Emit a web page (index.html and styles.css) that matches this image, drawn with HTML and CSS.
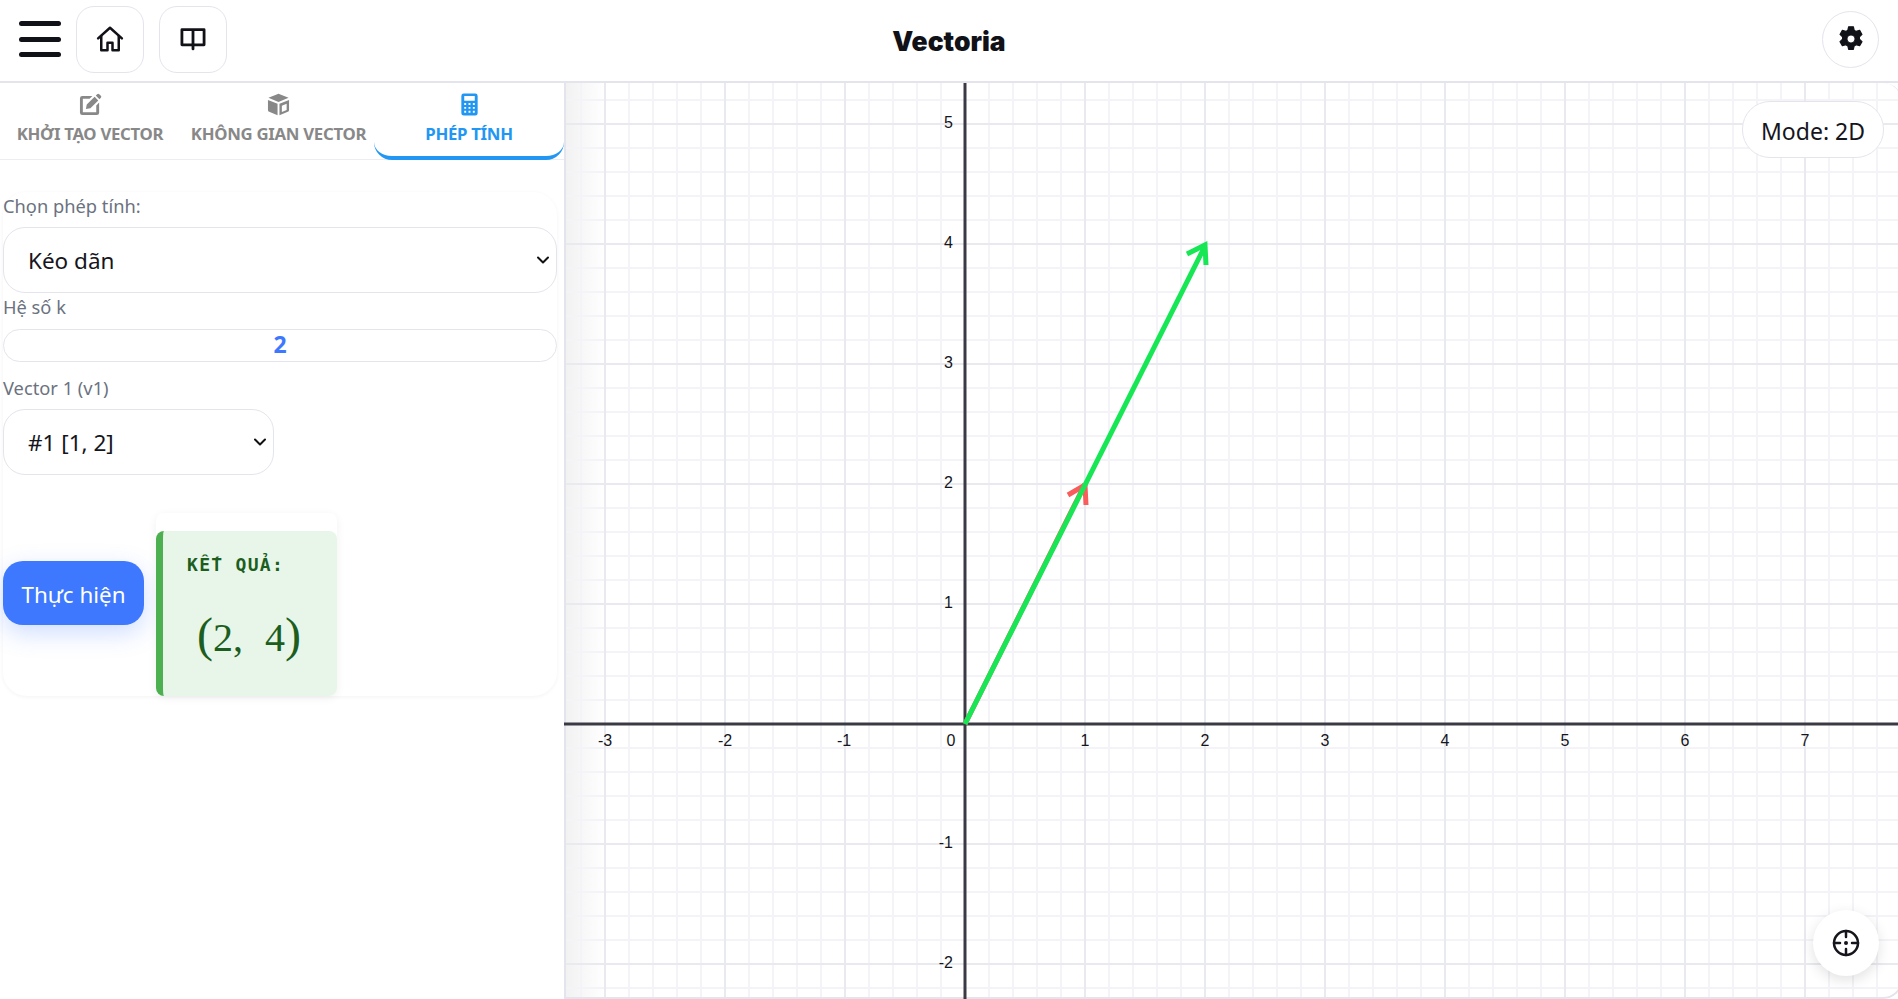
FILE: index.html
```html
<!DOCTYPE html>
<html lang="vi">
<head>
  <meta charset="UTF-8" />
  <meta name="viewport" content="width=device-width, initial-scale=1.0"/>
  <title>Vectoria</title>
  <link rel="stylesheet" href="styles.css">
</head>
<body>

  <header class="topbar">
    <div class="topbar-left">
      <button class="menu-btn" aria-label="Menu"><span></span><span></span><span></span></button>
      <button class="icon-btn" aria-label="Home">
        <svg width="30" height="30" viewBox="0 0 24 24" fill="none" stroke="#111118" stroke-width="2" stroke-linejoin="round" stroke-linecap="round"><path d="M2.5 11.5 12 3l9.5 8.500"/><path d="M5 9.5V21h5v-6h4v6h5V9.5"/></svg>
      </button>
      <button class="icon-btn" aria-label="Guide">
        <svg width="28" height="28" viewBox="0 0 24 24" fill="none" stroke="#111118" stroke-width="2.4" stroke-linejoin="round" stroke-linecap="round"><path d="M12 4H2.500v13H12V4zM12 4h9.500v13H12"/><path d="M12 17v3.500"/></svg>
      </button>
    </div>
    <h1 class="brand">Vectoria</h1>
    <button class="settings-btn" aria-label="Settings">
      <svg width="28" height="28" viewBox="0 0 24 24" fill="#111118" stroke="#111118" stroke-width="1" stroke-linejoin="round"><path fill-rule="evenodd" d="M10 1.500h4l.7 3 1.700 1 3-.9 2 3.500-2.200 2.100v2l2.200 2.100-2 3.500-3-.9-1.700 1-.7 3h-4l-.7-3-1.700-1-3 .9-2-3.500 2.200-2.100v-2L2.600 8.100l2-3.500 3 .9 1.700-1zM12 8.500a3.500 3.500 0 1 0 0 7 3.500 3.500 0 0 0 0-7z"/></svg>
    </button>
  </header>

  <div class="workspace">
    <aside class="sidebar">
      <nav class="tabs">
        <div class="tab">
          <svg width="23" height="23" viewBox="0 0 24 24" fill="currentColor"><path d="M3.5 3H14l-3 3H4v14h14v-7l3-3v10.500a2.500 2.500 0 0 1-2.500 2.500h-15A2.500 2.500 0 0 1 1 20.500v-15A2.500 2.500 0 0 1 3.500 3z"/><path d="M19 1.200a1.500 1.500 0 0 1 2.100 0l1.700 1.700a1.500 1.500 0 0 1 0 2.100l-1.500 1.500-3.800-3.800zM16.300 3.900l3.800 3.800-8.200 8.200-4.700.9.900-4.700z"/></svg>
          <span>KHỞI TẠO VECTOR</span>
        </div>
        <div class="tab">
          <svg width="23" height="23" viewBox="0 0 24 24" fill="currentColor"><path d="M12 .8 22.500 5 12 9.300 1.500 5z"/><path d="M1 7.200 11 11.300V23.200L2.300 19.600A2 2 0 0 1 1 17.700z"/><path fill-rule="evenodd" d="M23 7.200V17.700a2 2 0 0 1-1.300 1.900L13 23.200V11.300zM20.500 11.200 15.500 13.200V19.800L20.500 17.700z"/></svg>
          <span>KHÔNG GIAN VECTOR</span>
        </div>
        <div class="tab active">
          <svg width="23" height="23" viewBox="0 0 24 24" fill="currentColor"><path fill-rule="evenodd" d="M6 .5h12A2.500 2.500 0 0 1 20.500 3v18a2.500 2.500 0 0 1-2.500 2.500H6A2.500 2.500 0 0 1 3.500 21V3A2.500 2.500 0 0 1 6 .5zM6.500 3v5h11V3zM6.500 10.500v2h2v-2zM11 10.500v2h2v-2zM15.500 10.500v2h2v-2zM6.500 14.500v2h2v-2zM11 14.500v2h2v-2zM15.500 14.500v2h2v-2zM6.500 18.500v2h2v-2zM11 18.500v2h2v-2zM15.500 18.500v2h2v-2z"/></svg>
          <span>PHÉP TÍNH</span>
        </div>
      </nav>

      <section class="panel">
        <label class="field-label">Chọn phép tính:</label>
        <div class="select-box">
          <span>Kéo dãn</span>
          <svg class="chevron" width="14" height="14" viewBox="0 0 14 14" fill="none" stroke="#111" stroke-width="2" stroke-linecap="round" stroke-linejoin="round"><path d="M2 4.500 7 9.500l5-5"/></svg>
        </div>
        <label class="field-label label-k">Hệ số k</label>
        <div class="number-box">2</div>
        <label class="field-label label-v">Vector 1 (v1)</label>
        <div class="select-box select-small">
          <span>#1 [1, 2]</span>
          <svg class="chevron" width="14" height="14" viewBox="0 0 14 14" fill="none" stroke="#111" stroke-width="2" stroke-linecap="round" stroke-linejoin="round"><path d="M2 4.500 7 9.500l5-5"/></svg>
        </div>
        <div class="action-row">
          <button class="run-btn">Thực hiện</button>
          <div class="result-wrap">
            <div class="result">
              <div class="result-title">KẾT QUẢ:</div>
              <div class="result-math"><span class="paren">(</span>2, 4<span class="paren">)</span></div>
            </div>
          </div>
        </div>
      </section>
    </aside>

    <main class="plot">
      <svg class="plot-svg" width="1339" height="916" viewBox="564 83 1339 916">
        <g class="axes">
          <line x1="564" y1="724" x2="1903" y2="724"/>
          <line x1="965" y1="83" x2="965" y2="999"/>
        </g>
        <g class="vec vec-red">
          <line x1="965" y1="724" x2="1085" y2="484"/>
          <path d="M1068 495 1085 485 1086 505"/>
        </g>
        <g class="vec vec-green">
          <line x1="965" y1="724" x2="1205" y2="246"/>
          <path d="M1187 254 1205 245 1206 265"/>
        </g>
        <g class="ticks-x">
          <text x="605" y="746">-3</text>
          <text x="725" y="746">-2</text>
          <text x="844" y="746">-1</text>
          <text x="951" y="746">0</text>
          <text x="1085" y="746">1</text>
          <text x="1205" y="746">2</text>
          <text x="1325" y="746">3</text>
          <text x="1445" y="746">4</text>
          <text x="1565" y="746">5</text>
          <text x="1685" y="746">6</text>
          <text x="1805" y="746">7</text>
        </g>
        <g class="ticks-y">
          <text x="953" y="128">5</text>
          <text x="953" y="248">4</text>
          <text x="953" y="368">3</text>
          <text x="953" y="488">2</text>
          <text x="953" y="608">1</text>
          <text x="953" y="848">-1</text>
          <text x="953" y="968">-2</text>
        </g>
      </svg>

      <div class="mode-pill">Mode: 2D</div>

      <button class="recenter-btn" aria-label="Recenter">
        <svg width="30" height="30" viewBox="0 0 30 30" fill="none" stroke="#15151c" stroke-width="2.5" stroke-linecap="round"><circle cx="15" cy="15" r="12"/><path d="M15 3v6M15 21v6M3 15h6M21 15h6"/><circle cx="15" cy="15" r="2" fill="#15151c" stroke="none"/></svg>
      </button>
    </main>
  </div>

</body>
</html>
```

FILE: styles.css
```css
* {
  box-sizing: border-box;
}

html, body {
  height: 100%;
}

body {
  font-family: "Noto Sans", "Open Sans", sans-serif;
  margin: 0;
  background: #fff;
  color: #15151c;
  overflow: hidden;
  display: flex;
  flex-direction: column;
}

button {
  font-family: inherit;
  cursor: pointer;
}

/* Top bar */
.topbar {
  height: 83px;
  flex: none;
  display: flex;
  align-items: center;
  justify-content: space-between;
  position: relative;
  padding: 0 19px 3px 19px;
  border-bottom: 2px solid #e4e4ec;
}

.topbar-left {
  display: flex;
  align-items: center;
}

.menu-btn {
  width: 42px;
  height: 36px;
  padding: 0;
  border: 0;
  background: none;
  display: flex;
  flex-direction: column;
  justify-content: space-between;
}

.menu-btn span {
  display: block;
  height: 5px;
  border-radius: 3px;
  background: #111118;
}

.icon-btn {
  width: 68px;
  height: 67px;
  margin-left: 15px;
  border: 1px solid #e4e4ec;
  border-radius: 18px;
  background: #fff;
  display: flex;
  align-items: center;
  justify-content: center;
}

.brand {
  position: absolute;
  left: 0;
  right: 0;
  margin: 0;
  padding-top: 4px;
  text-align: center;
  font-family: Inter, sans-serif;
  font-size: 26.5px;
  font-weight: 900;
  color: #111118;
  pointer-events: none;
}

.settings-btn {
  width: 57px;
  height: 57px;
  border: 1px solid #e4e4ec;
  border-radius: 50%;
  background: #fff;
  display: flex;
  align-items: center;
  justify-content: center;
}

/* Workspace */
.workspace {
  flex: 1;
  min-height: 0;
  display: flex;
}

.sidebar {
  width: 564px;
  flex: none;
  background: #fff;
}

.tabs {
  height: 77px;
  display: grid;
  grid-template-columns: 180px 194px 190px;
  border-bottom: 1px solid #ececf2;
}

.tab {
  display: flex;
  flex-direction: column;
  align-items: center;
  padding-top: 10px;
  gap: 6px;
  color: #888;
  font-size: 16.8px;
  font-weight: 700;
  letter-spacing: -0.3px;
  white-space: nowrap;
}

.tab:nth-child(2) {
  padding-left: 3px;
}

.tab.active {
  color: #2196f3;
  border-bottom: 4px solid #2196f3;
  border-radius: 0 0 18px 18px;
  height: 77px;
}

/* Form panel */
.panel {
  width: 554px;
  height: 504px;
  margin: 32px 0 0 3px;
  padding-top: 1px;
  border-radius: 24px;
  box-shadow: 0 1px 4px rgba(0,0,0,0.05);
}

.field-label {
  display: block;
  font-size: 18.3px;
  color: #6b7280;
  line-height: 26px;
}

.label-k {
  margin-top: 1px;
}

.label-v {
  margin-top: 13px;
}

.select-box {
  height: 66px;
  margin-top: 8px;
  padding: 0 6px 0 24px;
  border: 1.5px solid #e4e4ec;
  border-radius: 22px;
  background: #fff;
  display: flex;
  align-items: center;
  justify-content: space-between;
  font-size: 22.5px;
  color: #15151c;
}

.select-small {
  width: 271px;
}

.number-box {
  height: 33px;
  margin-top: 9px;
  border: 1.5px solid #e4e4ec;
  border-radius: 17px;
  background: #fff;
  text-align: center;
  line-height: 28px;
  font-size: 23px;
  font-weight: 700;
  color: #3d78ff;
}

.action-row {
  display: flex;
  align-items: flex-start;
  gap: 12px;
  margin-top: 38px;
}

.run-btn {
  width: 141px;
  height: 64px;
  margin-top: 48px;
  padding: 2px 0 0;
  border: 0;
  border-radius: 20px;
  background: #3d78ff;
  color: #fff;
  font-size: 22.4px;
  box-shadow: 0 8px 24px rgba(61,120,255,0.25);
}

.result-wrap {
  width: 181px;
  padding-top: 18px;
  box-shadow: 0 2px 10px rgba(0,0,0,0.06);
  border-radius: 8px;
}

.result {
  height: 165px;
  padding: 23px 0 0 24px;
  background: #e8f5e9;
  border-left: 7px solid #4caf50;
  border-radius: 8px;
  color: #1b5e20;
}

.result-title {
  font-family: "DejaVu Sans Mono", "Liberation Mono", monospace;
  font-size: 18px;
  font-weight: 700;
  letter-spacing: 1.3px;
}

.result-math {
  font-family: "Liberation Serif", serif;
  font-size: 40px;
  line-height: 50px;
  word-spacing: 12px;
  margin: 35px 0 0 10px;
  white-space: nowrap;
}

.paren {
  font-size: 48px;
}

/* Graph */
.plot {
  flex: 1;
  margin-right: -5px;
  position: relative;
  overflow: hidden;
  border-radius: 0 20px 20px 0;
  background-color: #fff;
  background-image:
    linear-gradient(to right, #e9e9f0 2px, transparent 2px),
    linear-gradient(to bottom, #e9e9f0 2px, transparent 2px),
    linear-gradient(to right, #f4f4f8 2px, transparent 2px),
    linear-gradient(to bottom, #f4f4f8 2px, transparent 2px),
    linear-gradient(to right, #f1f1f1, #fff);
  background-size:
    120px 120px,
    120px 120px,
    24px 24px,
    24px 24px,
    42px 100%;
  background-position:
    40px 40px,
    40px 40px,
    16px 16px,
    16px 16px,
    0 0;
  background-repeat: repeat, repeat, repeat, repeat, no-repeat;
}

/* outline of the graph area, drawn over the grid */
.plot::before {
  content: "";
  position: absolute;
  inset: -2px 0 0 0;
  border: 2px solid #e4e4ec;
  border-radius: 0 20px 20px 0;
  pointer-events: none;
}

.plot-svg {
  position: absolute;
  left: 0;
  top: 0;
}

.axes line {
  stroke: #3a3a44;
  stroke-width: 3;
}

.vec line, .vec path {
  fill: none;
  stroke-width: 5;
}

.vec-red line, .vec-red path {
  stroke: #f85c5c;
}

.vec-green line, .vec-green path {
  stroke: #17e655;
}

.ticks-x text, .ticks-y text {
  font-family: "Liberation Sans", Arial, sans-serif;
  font-size: 16px;
  fill: #15151c;
}

.ticks-x text {
  text-anchor: middle;
}

.ticks-y text {
  text-anchor: end;
}

.mode-pill {
  position: absolute;
  top: 18px;
  right: 19px;
  width: 142px;
  height: 57px;
  padding-top: 2px;
  border: 1px solid #e4e4ec;
  border-radius: 28px;
  background: #fff;
  display: flex;
  align-items: center;
  justify-content: center;
  font-size: 23px;
  color: #15151c;
}

.recenter-btn {
  position: absolute;
  right: 24px;
  bottom: 23px;
  width: 66px;
  height: 66px;
  border: 0;
  border-radius: 50%;
  background: #fff;
  box-shadow: 0 4px 14px rgba(0,0,0,0.12);
  display: flex;
  align-items: center;
  justify-content: center;
}
```
